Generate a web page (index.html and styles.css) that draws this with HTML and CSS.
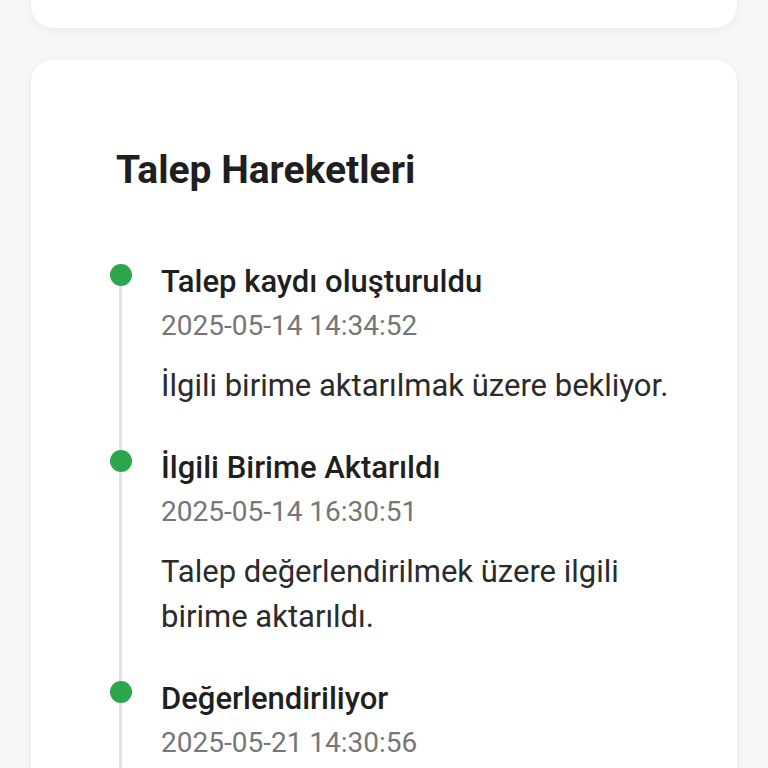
FILE: index.html
```html
<!DOCTYPE html>
<html lang="tr">

<head>
  <meta charset="UTF-8" />
  <meta name="viewport" content="width=device-width, initial-scale=1.0" />
  <title>Talep Detayı</title>
  <link rel="stylesheet" href="styles.css">
</head>

<body>
  <div class="page">
    <div class="card card-top"></div>

    <div class="card history">
      <h2 class="history-title">Talep Hareketleri</h2>

      <div class="timeline">
        <div class="step">
          <span class="dot"></span>
          <div class="step-title">Talep kaydı oluşturuldu</div>
          <div class="step-date">2025-05-14 14:34:52</div>
          <div class="step-desc">İlgili birime aktarılmak üzere bekliyor.</div>
        </div>

        <div class="step">
          <span class="dot"></span>
          <div class="step-title">İlgili Birime Aktarıldı</div>
          <div class="step-date">2025-05-14 16:30:51</div>
          <div class="step-desc">Talep değerlendirilmek üzere ilgili birime aktarıldı.</div>
        </div>

        <div class="step">
          <span class="dot"></span>
          <div class="step-title">Değerlendiriliyor</div>
          <div class="step-date">2025-05-21 14:30:56</div>
          <div class="step-desc">Talebiniz ilgili birim tarafından değerlendiriliyor.</div>
        </div>
      </div>
    </div>
  </div>
</body>

</html>
```

FILE: styles.css
```css
body {
  margin: 0;
  background-color: #f6f7f9;
  font-family: Roboto, "Noto Sans", sans-serif;
  color: #1f1f1f;
}

.page {
  padding: 0 31px;
}

.card {
  background-color: white;
  border-radius: 22px;
  box-shadow: 0 2px 8px rgba(0, 0, 0, 0.07);
}

.card-top {
  height: 28px;
  border-radius: 0 0 22px 22px;
}

.history {
  margin-top: 32px;
  padding: 87px 60px 80px 85px;
}

.history-title {
  margin: 0;
  font-size: 39px;
  line-height: 46px;
  font-weight: 700;
  color: #1f1f1f;
}

.timeline {
  position: relative;
  margin-top: 67px;
}

.timeline::before {
  content: "";
  position: absolute;
  left: 3px;
  top: 14px;
  bottom: 0;
  width: 3px;
  background-color: #e2e2e4;
}

.step {
  position: relative;
  padding-left: 45px;
  margin-bottom: 38px;
}

.dot {
  position: absolute;
  left: -6px;
  top: 4px;
  width: 22px;
  height: 22px;
  border-radius: 50%;
  background-color: #2ca64a;
}

.step-title {
  font-size: 31px;
  line-height: 44px;
  font-weight: 500;
  color: #1f1f1f;
}

.step-date {
  font-size: 28px;
  line-height: 43px;
  color: #767676;
}

.step-desc {
  margin-top: 16px;
  font-size: 31px;
  line-height: 45px;
  color: #2b2b2b;
}
```
